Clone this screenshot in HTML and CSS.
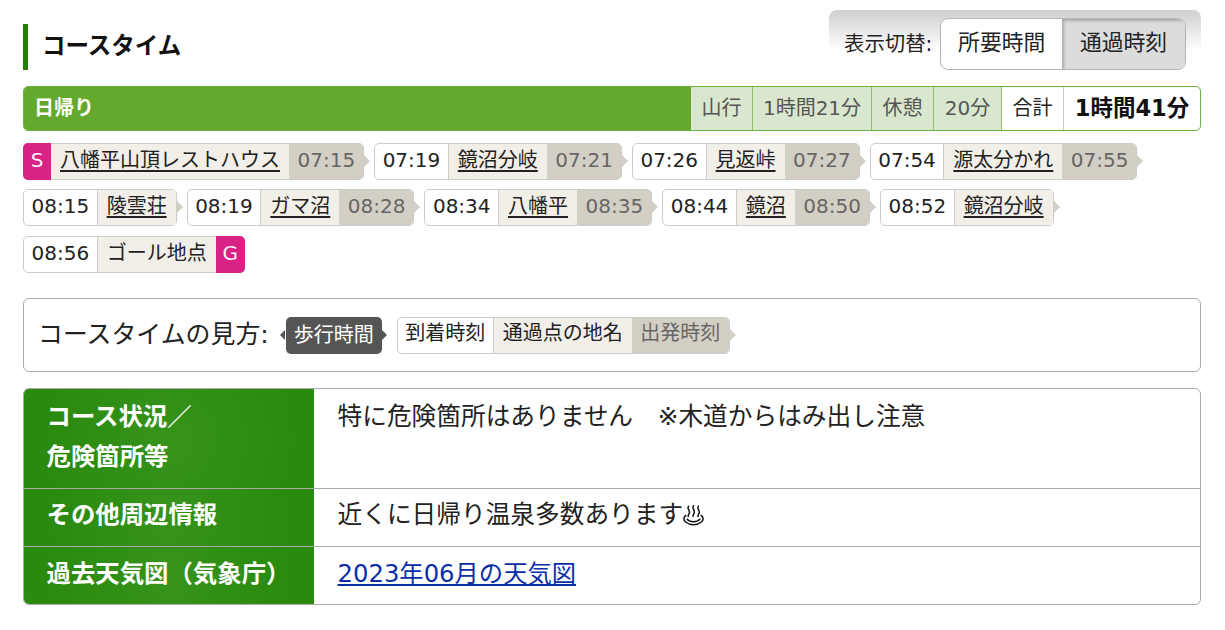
FILE: index.html
```html
<!DOCTYPE html>
<html lang="ja">
<head>
<meta charset="utf-8">
<title>コースタイム</title>
<link rel="stylesheet" href="styles.css">
</head>
<body>
<main class="page">
  <header class="head">
    <h2 class="title">コースタイム</h2>
    <div class="switch">
      <span class="switch-label">表示切替:</span>
      <div class="switch-btns">
        <span class="btn">所要時間</span>
        <span class="btn btn-on">通過時刻</span>
      </div>
    </div>
  </header>

  <section class="summary">
    <div class="sum-name">日帰り</div>
    <div class="sum-cell sum-tint sum-a">山行</div>
    <div class="sum-cell sum-tint sum-b">1時間21分</div>
    <div class="sum-cell sum-tint sum-c">休憩</div>
    <div class="sum-cell sum-tint sum-d">20分</div>
    <div class="sum-cell sum-e">合計</div>
    <div class="sum-cell sum-total">1時間41分</div>
  </section>

  <section class="route">
    <div class="chip arrow"><span class="mark">S</span><a class="place" href="#">八幡平山頂レストハウス</a><span class="dep">07:15</span></div>
    <div class="chip arrow"><span class="arr">07:19</span><a class="place" href="#">鏡沼分岐</a><span class="dep">07:21</span></div>
    <div class="chip arrow"><span class="arr">07:26</span><a class="place" href="#">見返峠</a><span class="dep">07:27</span></div>
    <div class="chip arrow"><span class="arr">07:54</span><a class="place" href="#">源太分かれ</a><span class="dep">07:55</span></div>
    <div class="chip arrow"><span class="arr">08:15</span><a class="place" href="#">陵雲荘</a></div>
    <div class="chip arrow"><span class="arr">08:19</span><a class="place" href="#">ガマ沼</a><span class="dep">08:28</span></div>
    <div class="chip arrow"><span class="arr">08:34</span><a class="place" href="#">八幡平</a><span class="dep">08:35</span></div>
    <div class="chip arrow"><span class="arr">08:44</span><a class="place" href="#">鏡沼</a><span class="dep">08:50</span></div>
    <div class="chip arrow"><span class="arr">08:52</span><a class="place" href="#">鏡沼分岐</a></div>
    <div class="chip"><span class="arr">08:56</span><span class="place">ゴール地点</span><span class="mark">G</span></div>
  </section>

  <section class="legend">
    <span class="legend-title">コースタイムの見方:</span>
    <span class="walk">歩行時間</span>
    <div class="chip arrow"><span class="arr">到着時刻</span><span class="place">通過点の地名</span><span class="dep">出発時刻</span></div>
  </section>

  <section class="info">
    <div class="row row-1">
      <div class="th">コース状況／<br>危険箇所等</div>
      <div class="td">特に危険箇所はありません　※木道からはみ出し注意</div>
    </div>
    <div class="row row-2">
      <div class="th">その他周辺情報</div>
      <div class="td">近くに日帰り温泉多数あります<svg class="onsen" viewBox="0 0 21 21" aria-label="温泉" role="img"><path d="M5.6 1.2c-2.2 2.6 2.2 4.6 .6 7.2-.6 1-1.2 1.800-1 3"/><path d="M10.500 .6c-2.200 2.800 2.200 4.800 .6 7.600-.6 1-1.200 1.800-1 3"/><path d="M15.400 1.200c-2.200 2.600 2.200 4.600 .6 7.200-.6 1-1.200 1.800-1 3"/><path d="M2.800 10.500c-2.600 1.600-2.400 4.800-.2 6.500 2 1.600 4.900 2.800 7.900 2.800s5.900-1.200 7.900-2.800c2.200-1.700 2.400-4.900-.2-6.500"/><path d="M4.200 14.200c1.500 1.700 3.800 2.500 6.300 2.500s4.800-.8 6.300-2.500"/></svg></div>
    </div>
    <div class="row row-3">
      <div class="th">過去天気図（気象庁）</div>
      <div class="td"><a class="link" href="#">2023年06月の天気図</a></div>
    </div>
  </section>
</main>
</body>
</html>
```
FILE: styles.css
```css
* { box-sizing: border-box; }
html, body { margin: 0; background: #fff; }
body {
  font-family: "DejaVu Sans", "Noto Sans CJK JP", sans-serif;
  color: #222;
  font-size: 20px;
}
.page { width: 1178px; margin-left: 23px; padding-top: 10px; }

.head { display: flex; justify-content: space-between; align-items: flex-start; height: 76px; }
.title {
  margin: 14px 0 0;
  height: 46px;
  line-height: 45px;
  padding-left: 14px;
  border-left: 5px solid #1f7f06;
  font-size: 23.5px;
  font-weight: 700;
  color: #111;
}
.switch {
  width: 372px;
  height: 60px;
  padding: 8px 15px 0;
  border-radius: 8px 8px 0 0;
  background: linear-gradient(#cfcfcf, #fff 68%);
  display: flex;
  justify-content: flex-end;
  gap: 8px;
}
.switch-label { line-height: 52px; white-space: nowrap; font-size: 20.4px; }
.switch-btns {
  display: flex;
  width: 247px;
  height: 52px;
  border: 1px solid #b5b5b5;
  border-radius: 8px;
  overflow: hidden;
  background: #fff;
}
.btn { flex: 1 1 0; text-align: center; line-height: 48px; font-size: 21.8px; }
.btn-on {
  flex: 0 0 123px;
  background: #dcdcdc;
  box-shadow: inset 2px 2px 3px #aaa;
}

.summary {
  display: flex;
  height: 45px;
  border: 1px solid #6cb33f;
  border-radius: 5px;
  overflow: hidden;
  line-height: 42px;
}
.sum-name {
  flex: 1 1 auto;
  padding-left: 10px;
  background: #64a92d;
  color: #fff;
  font-weight: 700;
  font-size: 20px;
}
.sum-cell { text-align: center; white-space: nowrap; border-left: 1px solid #8cc063; }
.sum-tint { background: #d9e7cf; color: #555; }
.sum-a { flex: 0 0 61px; border-left: 0; }
.sum-b { flex: 0 0 119px; }
.sum-c { flex: 0 0 62px; }
.sum-d { flex: 0 0 68px; }
.sum-e { flex: 0 0 62px; }
.sum-total { flex: 0 0 137px; font-weight: 700; font-size: 22.5px; color: #111; border-left-color: #ccc; }

.route {
  margin-top: 12px;
  display: flex;
  flex-wrap: wrap;
  gap: 9.4px 10px;
}
.chip {
  position: relative;
  display: inline-flex;
  height: 37px;
  border: 1px solid #ccc;
  border-radius: 5px;
  background: #fff;
  line-height: 33px;
  white-space: nowrap;
}
.chip.arrow::after {
  content: "";
  position: absolute;
  left: 100%;
  top: 11px;
  margin-left: 1px;
  border-style: solid;
  border-width: 6px 0 6px 6px;
  border-color: transparent transparent transparent #d3cfc5;
}
.mark {
  width: 28px;
  margin: -1px;
  line-height: 35px;
  text-align: center;
  background: #d92285;
  color: #fdeef6;
}
.mark:first-child { border-radius: 5px 0 0 5px; margin-right: 0; }
.mark:last-child { width: 29px; border-radius: 0 5px 5px 0; margin-left: 0; }
.arr { padding: 0 7.5px; }
.place {
  padding: 0 9px;
  background: #f2eee8;
  border-left: 1px solid #ccc;
  color: #222;
}
.mark + .place { border-left: 0; }
.dep {
  padding: 0 8px 0 8.5px;
  background: #d3cfc5;
  color: #666;
  border-radius: 0 4px 4px 0;
}
a.place { text-decoration: underline; text-underline-offset: 3px; }

.legend {
  margin-top: 25px;
  height: 74px;
  padding: 2px 0 0 14px;
  border: 1px solid #aaa;
  border-radius: 6px;
  display: flex;
  align-items: center;
}
.legend-title { font-size: 24.9px; margin: 0 17px 8px 0; color: #222; }
.legend .chip { line-height: 31px; }
.legend .dep { padding: 0 8.5px; }
.walk {
  position: relative;
  height: 37px;
  width: 96px;
  margin-right: 15px;
  text-align: center;
  line-height: 37px;
  font-size: 20px;
  background: #555;
  color: #fff;
  border-radius: 5px;
}
.walk::before, .walk::after {
  content: "";
  position: absolute;
  top: 13px;
  border-style: solid;
  border-color: transparent;
}
.walk::before { right: 100%; margin-right: 1px; border-width: 5px 5px 5px 0; border-right-color: #555; }
.walk::after { left: 100%; border-width: 5px 0 5px 5px; border-left-color: #555; }

.info {
  margin-top: 16px;
  border: 1px solid #aaa;
  border-radius: 6px;
  overflow: hidden;
}
.row { display: flex; border-top: 1px solid #aaa; }
.row:first-child { border-top: 0; }
.row-1 { height: 99px; --pad: 8px; }
.row-2 { height: 58px; --pad: 6px; }
.row-3 { height: 58px; --pad: 7px; }
.th {
  flex: 0 0 290px;
  padding: var(--pad) 0 0 22.5px;
  background: radial-gradient(circle at 50% 50%, #36931c, #2a8a0e 80%);
  color: #fff;
  font-size: 24.4px;
  font-weight: 700;
  line-height: 40px;
}
.td { flex: 1 1 auto; padding: var(--pad) 0 0 23.5px; font-size: 24.7px; line-height: 40px; color: #222; }
.link { color: #0a2ea8; font-size: 24.3px; }
.onsen {
  width: 21px;
  height: 21px;
  vertical-align: -3px;
  fill: none;
  stroke: #111;
  stroke-width: 1.500;
  stroke-linecap: round;
}
```
